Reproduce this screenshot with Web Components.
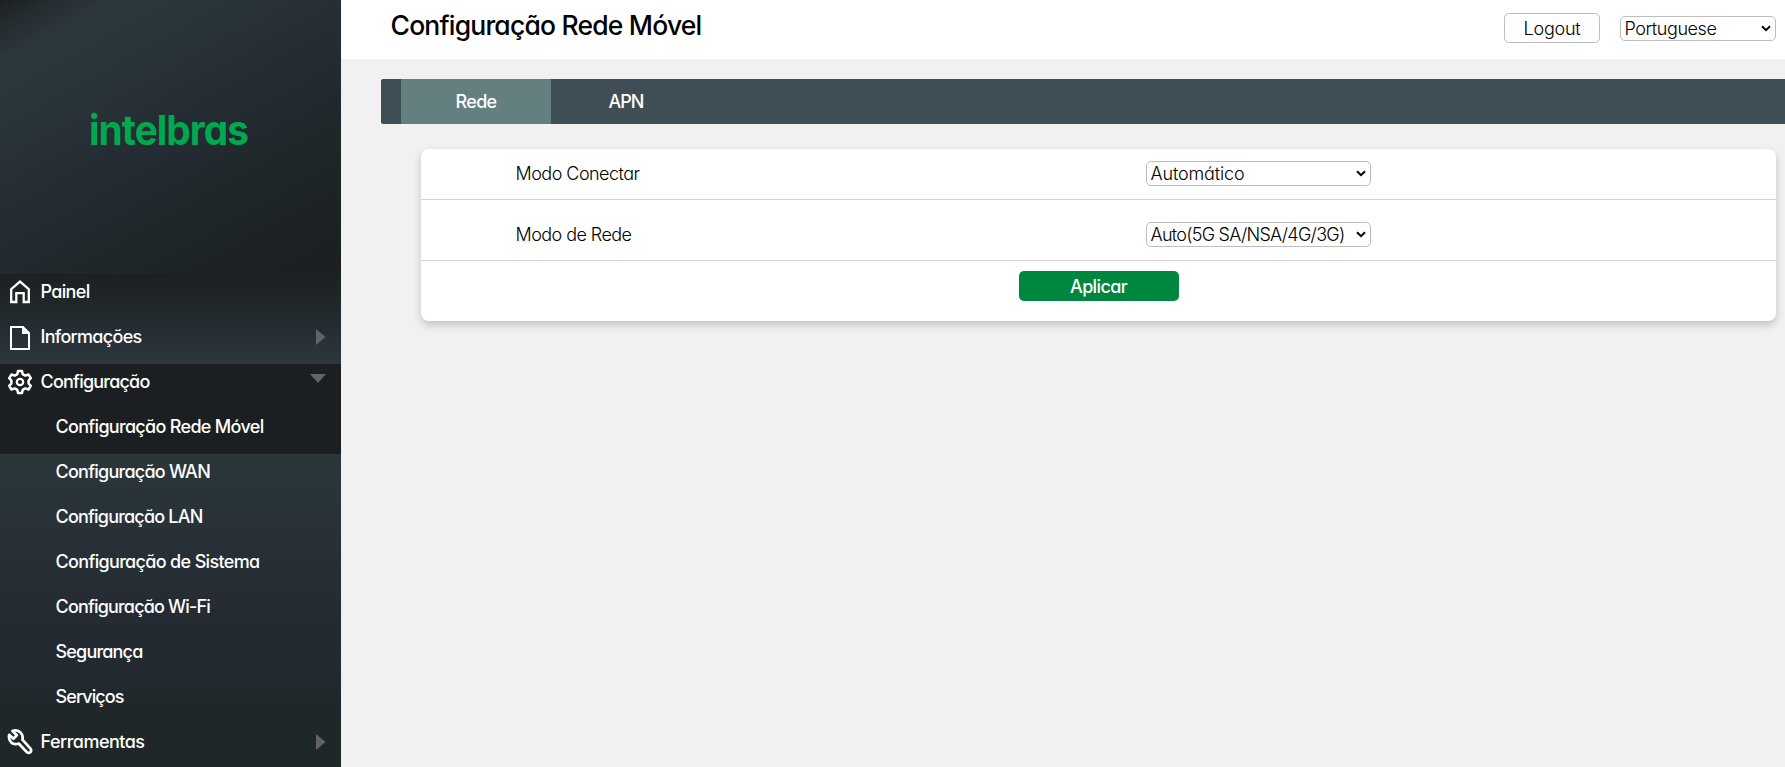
<!DOCTYPE html>
<html lang="pt-BR">
<head>
<meta charset="utf-8">
<title>Configuração Rede Móvel</title>
<style>
html,body{margin:0;height:100%;overflow:hidden}
body{font:18px/24px Inter,"Noto Sans",sans-serif;font-feature-settings:"cv11" 1,"calt" 0;color:#000;background:#f1f1f1}
</style>
</head>
<body>
<router-app></router-app>
<script>
function define(name, html, setup) {
  const t = document.createElement('template');
  t.innerHTML = html;
  customElements.define(name, class extends HTMLElement {
    connectedCallback() {
      if (this.shadowRoot) return;
      this.attachShadow({mode: 'open'}).append(t.content.cloneNode(true));
      if (setup) setup(this, this.shadowRoot);
    }
  });
}

const icons = {
  home: '<path d="M11.200 23V10.200L20 2.600l8.800 7.600V23H23.700V14.200H16.300V23Z" stroke-width="2.300"/>',
  file: '<path d="M11 3H23L29 9V25H11Z" stroke-width="2"/><path d="M22 2.500V10H29.500Z" fill="currentColor" stroke="none"/>',
  gear: '<path d="M18 2H22L22.700 5.200L25.200 6.600L28.500 5.500L30.800 9.100L28.600 11.500V14.500L30.800 16.900L28.500 20.500L25.200 19.400L22.700 20.800L22 24H18L17.300 20.800L14.800 19.400L11.500 20.500L9.200 16.900L11.400 14.500V11.500L9.200 9.100L11.500 5.500L14.800 6.600L17.300 5.200Z" stroke-width="2.500" stroke-linejoin="round"/><circle cx="20" cy="13" r="3.200" stroke-width="2.200"/>',
  tool: '<path d="M12.500 2Q17.500 .3 21 4Q23.400 7 22.400 10.700L30.300 19.300Q32 21.500 30.300 23.200Q28.500 24.600 26.700 23L18.700 14.500Q14 16.300 11 13.200Q8.200 10 9.200 5.800L13.500 9.700L16.800 6.300Z" stroke-width="2.700" stroke-linejoin="round"/>'
};

/* Inline label whose tracking is set so that it spans the width in "w";
   with "stretch" the glyphs are scaled as well, after the given tracking. */
define('fit-text', '<style>:host{display:inline-block;white-space:nowrap}span{display:inline-block;transform-origin:0 50%}</style><span><slot></slot></span>', (el, root) => {
  const span = root.querySelector('span');
  const n = el.textContent.length, w = +el.getAttribute('w');
  if (el.hasAttribute('stretch')) {
    span.style.letterSpacing = el.getAttribute('stretch');
    span.style.transform = 'scaleX(' + w / span.getBoundingClientRect().width + ')';
    el.style.width = w + 'px';
  } else span.style.letterSpacing = ((w - span.getBoundingClientRect().width) / n) + 'px';
});

define('brand-logo', `<style>
:host{display:flex;height:274px;align-items:flex-start;justify-content:center;
background:linear-gradient(151deg,#1b2022 0,#242c30 6%,#2d383d 14.500%,#293439 30%,#262e35 43%,#232a31 56%,#1f2729 70%,#1c2123 88%,#1b1f22 100%)}
fit-text{font:700 41px/54px Inter,sans-serif;font-feature-settings:"cv11" 1;color:#00a94f;margin:103px 4px 0 0}
</style><fit-text w="159" stretch="-1px">intelbras</fit-text>`);

define('nav-item', `<style>
:host{display:flex;height:45px;box-sizing:border-box;color:#fff;font-weight:500;padding-left:40px;line-height:36px}
:host([sub]){padding-left:55.500px}
svg{width:40px;height:28px;margin:5px .5px 0 -40px;fill:none;stroke:currentColor;flex:none}
.arrow{margin:9px 15px 0 auto;width:16px;height:18px;stroke:none;fill:#636363}
</style><slot></slot>`, (el, root) => {
  const svg = (s) => Object.assign(document.createElement('template'), {innerHTML: s}).content;
  if (el.hasAttribute('icon')) root.prepend(svg('<svg viewBox="0 0 40 28">' + icons[el.getAttribute('icon')] + '</svg>'));
  const a = el.getAttribute('arrow');
  if (a) root.append(svg('<svg class="arrow" viewBox="0 0 16 18"><path d="' + (a === 'right' ? 'M6 1V17L15.500 9Z' : 'M0 1H16L8 10Z') + '"/></svg>'));
});

define('nav-menu', `<style>
:host{display:block;width:341px;height:767px;overflow:hidden;flex:none}
.a{background:linear-gradient(#1b2022,#212829 35%,#252d34 60%,#2d373c)}
.b{background:#1b1f22}
.c{height:345px;background:linear-gradient(#2b363b,#273137 25%,#252b33 45%,#232930 62%,#1f2729 78%,#1e2527)}
</style>
<brand-logo></brand-logo>
<div class="a"><nav-item icon="home"><fit-text w="49">Painel</fit-text></nav-item>
<nav-item icon="file" arrow="right"><fit-text w="101">Informações</fit-text></nav-item></div>
<div class="b"><nav-item icon="gear" arrow="down"><fit-text w="109">Configuração</fit-text></nav-item>
<nav-item sub><fit-text w="208">Configuração Rede Móvel</fit-text></nav-item></div>
<div class="c"><nav-item sub><fit-text w="154.500">Configuração WAN</fit-text></nav-item>
<nav-item sub><fit-text w="147">Configuração LAN</fit-text></nav-item>
<nav-item sub><fit-text w="204">Configuração de Sistema</fit-text></nav-item>
<nav-item sub><fit-text w="154.500">Configuração Wi-Fi</fit-text></nav-item>
<nav-item sub><fit-text w="87">Segurança</fit-text></nav-item>
<nav-item sub><fit-text w="68">Serviços</fit-text></nav-item>
<nav-item icon="tool" arrow="right"><fit-text w="104">Ferramentas</fit-text></nav-item></div>`);

define('select-box', `<style>
:host{display:flex;box-sizing:border-box;height:25px;border:1px solid #bdbdbd;border-radius:5px;background:#fff;align-items:center;justify-content:space-between;padding:1px 4px 0 3.500px}
svg{width:10px;height:7px;fill:none;stroke:#000;stroke-width:2;margin-bottom:2px}
</style><slot></slot><svg viewBox="0 0 10 7"><path d="M1 1.200L5 5.200L9 1.200"/></svg>`);

define('page-header', `<style>
:host{display:flex;height:59px;background:#fff;padding:0 9px 0 49.500px;font-weight:350}
.title{font-size:26.500px;line-height:50px;font-weight:550;margin-right:auto}
.logout{box-sizing:border-box;width:96px;height:30px;border:1px solid #bdbdbd;border-radius:5px;margin:13px 20px 0 0;text-align:center;line-height:30px}
select-box{width:156px;margin-top:16px}
</style><fit-text class="title" w="311">Configuração Rede Móvel</fit-text>
<div class="logout"><fit-text w="57">Logout</fit-text></div>
<select-box><fit-text w="92">Portuguese</fit-text></select-box>`);

define('tab-bar', `<style>
:host{display:flex;height:45px;background:#3f4e55;margin:20px 0 0 40px;padding-left:20px;border-radius:2px 0 0 2px;color:#fff;font-weight:500}
div{width:150px;text-align:center;line-height:46px}
.on{background:#637f80}
</style><div class="on"><fit-text w="41">Rede</fit-text></div><div><fit-text w="35">APN</fit-text></div>`);

define('form-row', `<style>
:host{display:flex;box-sizing:border-box;border-bottom:1px solid #d3d3d3;padding-left:94.500px;align-items:flex-start}
.label{width:630.500px;line-height:26px}
select-box{width:225px}
</style><div class="label"><slot name="label"></slot></div><select-box><slot></slot></select-box>`);

define('settings-card', `<style>
:host{display:block;height:172px;margin:25px 9px 0 80px;background:#fff;border-radius:8px;box-shadow:0 4px 8px rgba(0,0,0,.2)}
form-row{height:51px;padding-top:12px}
form-row+form-row{height:61px;padding-top:22px}
fit-text{font-weight:350}
button fit-text{font-weight:500}
button{display:block;width:160px;height:30px;margin:10px auto 0;padding:2px 0 0;border:0;border-radius:5px;background:#00873f;color:#fff;font:inherit;font-feature-settings:inherit}
</style>
<form-row><fit-text slot="label" w="124">Modo Conectar</fit-text><fit-text w="94">Automático</fit-text></form-row>
<form-row><fit-text slot="label" w="116">Modo de Rede</fit-text><fit-text w="194">Auto(5G SA/NSA/4G/3G)</fit-text></form-row>
<button><fit-text w="57">Aplicar</fit-text></button>`);

define('router-app', `<style>
:host{display:flex;height:767px}
main{flex:1;min-width:0}
</style><nav-menu></nav-menu><main><page-header></page-header><tab-bar></tab-bar><settings-card></settings-card></main>`);
</script>
</body>
</html>
